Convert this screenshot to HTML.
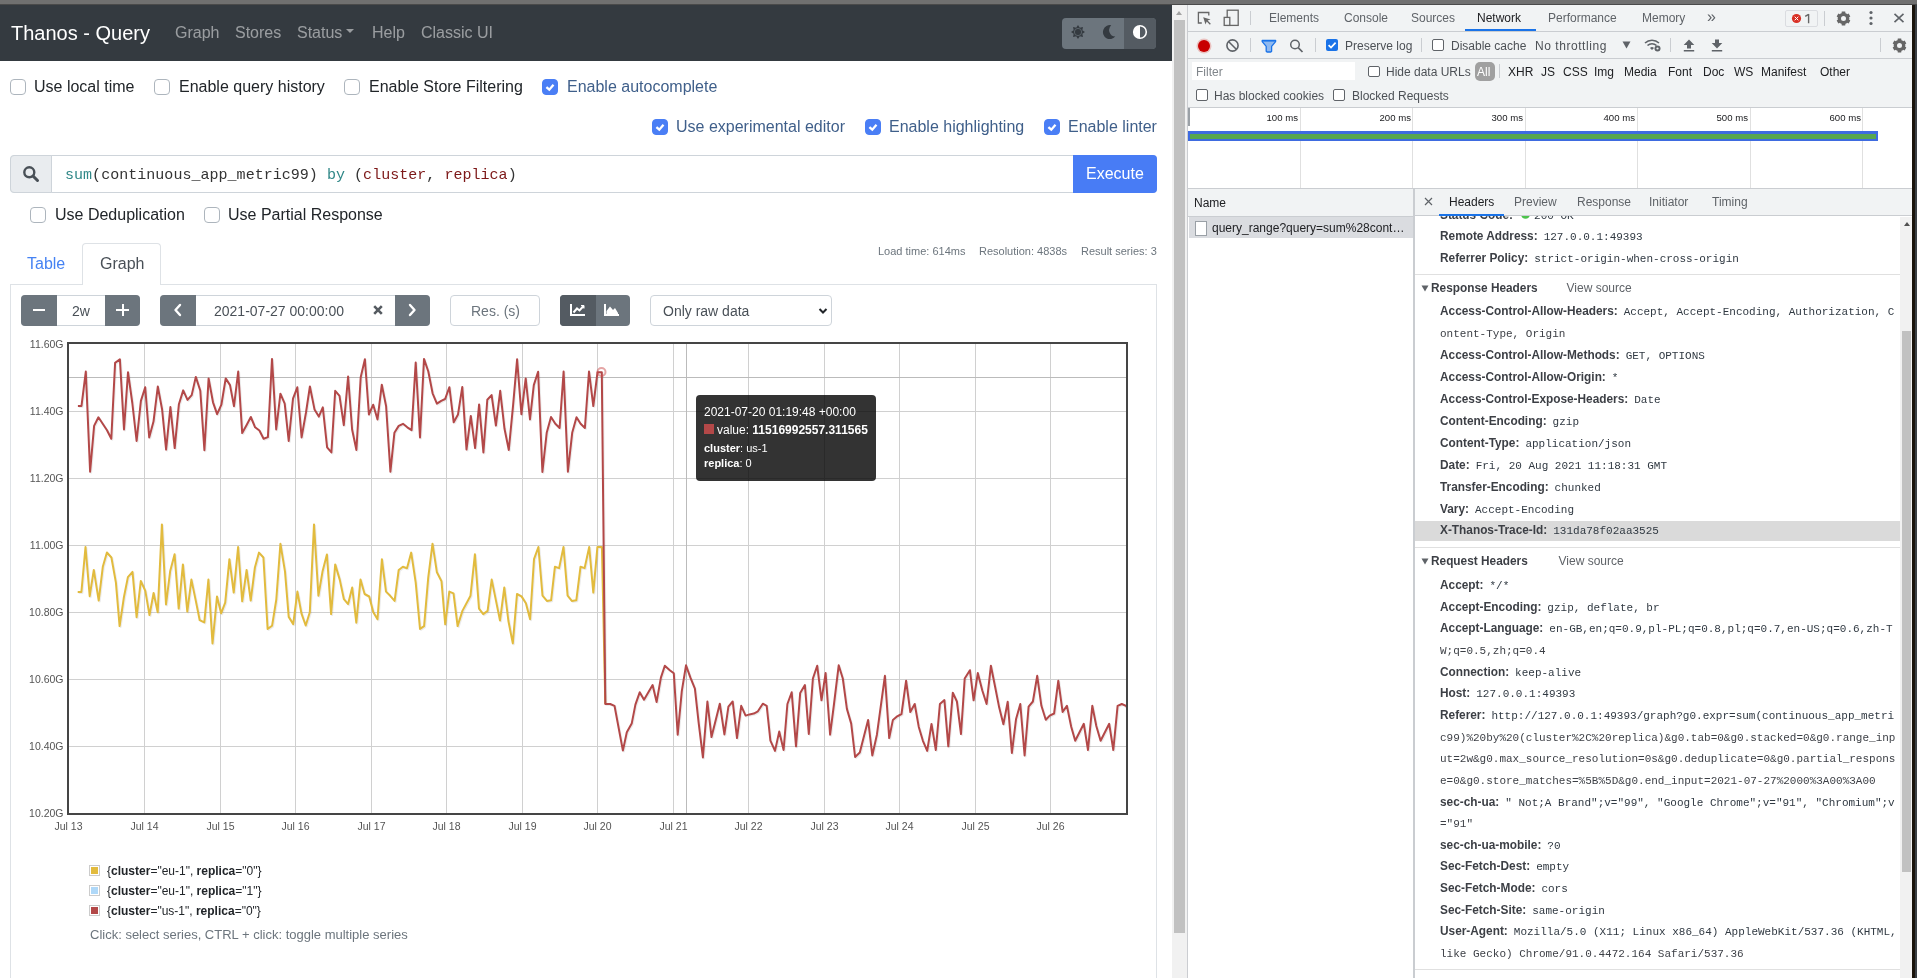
<!DOCTYPE html><html><head><meta charset="utf-8"><style>
*{box-sizing:border-box;margin:0;padding:0}
html,body{width:1917px;height:978px;overflow:hidden;background:#fff;font-family:"Liberation Sans",sans-serif;color:#212529}
.abs{position:absolute}
.t{position:absolute;white-space:nowrap;line-height:0;height:0}
.t>span{display:inline-block;line-height:normal;transform:translateY(-80%)}
body>*{will-change:transform}
.cb{position:absolute;width:16px;height:16px;border:1px solid #adb5bd;border-radius:4px;background:#fff}
.cb.on{background:#4a7ef5;border-color:#4a7ef5}
.cb svg{position:absolute;left:-1px;top:-1px}
.dt{font-family:"Liberation Sans",sans-serif;font-size:12px;color:#5f6368}
.mono{font-family:"Liberation Mono",monospace}
</style></head><body>

<div class="abs" style="left:0;top:0;width:1917px;height:5px;background:#707070"></div>
<div class="abs" style="left:0;top:4px;width:1917px;height:1px;background:#4a4a4a"></div>
<div class="abs" style="left:0;top:5px;width:1172px;height:56px;background:#343a40"></div>
<div class="t " style="left:11px;top:40px;font-size:20px;color:#fff"><span>Thanos - Query</span></div>
<div class="t " style="left:174.5px;top:38px;font-size:16px;color:rgba(255,255,255,.5)"><span>Graph</span></div>
<div class="t " style="left:235px;top:38px;font-size:16px;color:rgba(255,255,255,.5)"><span>Stores</span></div>
<div class="t " style="left:297px;top:38px;font-size:16px;color:rgba(255,255,255,.5)"><span>Status</span></div>
<div class="t " style="left:372px;top:38px;font-size:16px;color:rgba(255,255,255,.5)"><span>Help</span></div>
<div class="t " style="left:420.5px;top:38px;font-size:16px;color:rgba(255,255,255,.5)"><span>Classic UI</span></div>
<div class="abs" style="left:346.2px;top:29px;width:0;height:0;border-left:4.8px solid transparent;border-right:4.8px solid transparent;border-top:4.8px solid rgba(255,255,255,.5)"></div>
<div class="abs" style="left:1062px;top:18px;width:94px;height:31px;border-radius:4px;background:#6c757d;overflow:hidden"><div class="abs" style="left:62px;top:0;width:32px;height:31px;background:#545b62"></div></div>
<svg class="abs" style="left:1070px;top:24px" width="16" height="16" viewBox="-8 -8 16 16"><path d="M0.00,-7.00 L1.80,-4.34 L4.95,-4.95 L4.34,-1.80 L7.00,-0.00 L4.34,1.80 L4.95,4.95 L1.80,4.34 L0.00,7.00 L-1.80,4.34 L-4.95,4.95 L-4.34,1.80 L-7.00,0.00 L-4.34,-1.80 L-4.95,-4.95 L-1.80,-4.34 Z" fill="#343a40"/><circle r="3.6" fill="none" stroke="#6c757d" stroke-width="0.7"/><rect x="-2.1" y="-2.1" width="4.2" height="4.2" fill="#343a40"/></svg>
<svg class="abs" style="left:1101px;top:24px" width="16" height="16" viewBox="0 0 16 16"><path d="M10.2 1.2 A7 7 0 1 0 14.3 12.6 A6.6 6.6 0 0 1 10.2 1.2 Z" fill="#343a40"/></svg>
<svg class="abs" style="left:1132px;top:24px" width="16" height="16" viewBox="0 0 16 16"><circle cx="8" cy="8" r="6.3" fill="#545b62" stroke="#fff" stroke-width="1.6"/><path d="M8 1.7 A6.3 6.3 0 0 0 8 14.3 Z" fill="#fff"/></svg>
<div class="cb" style="left:10px;top:79px"></div>
<div class="t " style="left:34px;top:92px;font-size:16px;color:#212529"><span>Use local time</span></div>
<div class="cb" style="left:154px;top:79px"></div>
<div class="t " style="left:178.5px;top:92px;font-size:16px;color:#212529"><span>Enable query history</span></div>
<div class="cb" style="left:344px;top:79px"></div>
<div class="t " style="left:368.5px;top:92px;font-size:16px;color:#212529"><span>Enable Store Filtering</span></div>
<div class="cb on" style="left:542px;top:79px"><svg width="16" height="16" viewBox="0 0 16 16"><path d="M4.4 8.1 L7.3 10.7 L11.5 5.8" fill="none" stroke="#fff" stroke-width="2.3" stroke-linejoin="miter"/></svg></div>
<div class="t " style="left:566.5px;top:92px;font-size:16px;color:#3f5f8a"><span>Enable autocomplete</span></div>
<div class="cb on" style="left:652px;top:119px"><svg width="16" height="16" viewBox="0 0 16 16"><path d="M4.4 8.1 L7.3 10.7 L11.5 5.8" fill="none" stroke="#fff" stroke-width="2.3" stroke-linejoin="miter"/></svg></div>
<div class="t " style="left:676px;top:132px;font-size:16px;color:#3f5f8a"><span>Use experimental editor</span></div>
<div class="cb on" style="left:865px;top:119px"><svg width="16" height="16" viewBox="0 0 16 16"><path d="M4.4 8.1 L7.3 10.7 L11.5 5.8" fill="none" stroke="#fff" stroke-width="2.3" stroke-linejoin="miter"/></svg></div>
<div class="t " style="left:889px;top:132px;font-size:16px;color:#3f5f8a"><span>Enable highlighting</span></div>
<div class="cb on" style="left:1044px;top:119px"><svg width="16" height="16" viewBox="0 0 16 16"><path d="M4.4 8.1 L7.3 10.7 L11.5 5.8" fill="none" stroke="#fff" stroke-width="2.3" stroke-linejoin="miter"/></svg></div>
<div class="t " style="left:1068px;top:132px;font-size:16px;color:#3f5f8a"><span>Enable linter</span></div>
<div class="abs" style="left:10px;top:155px;width:1147px;height:38px;border:1px solid #ced4da;border-radius:4px;background:#fff"></div>
<div class="abs" style="left:10px;top:155px;width:42px;height:38px;border:1px solid #ced4da;border-radius:4px 0 0 4px;background:#e9ecef"></div>
<svg class="abs" style="left:22px;top:165px" width="18" height="18" viewBox="0 0 18 18"><circle cx="7.3" cy="7.3" r="5" fill="none" stroke="#495057" stroke-width="2.4"/><path d="M11 11 L15.5 15.5" stroke="#495057" stroke-width="3" stroke-linecap="round"/></svg>
<div class="abs" style="left:1073px;top:155px;width:84px;height:38px;border-radius:0 4px 4px 0;background:#487cf5"></div>
<div class="t " style="left:1086px;top:179px;font-size:16px;color:#fff"><span>Execute</span></div>
<div class="t mono" style="left:64.5px;top:180.5px;font-size:15px;color:#333;letter-spacing:0.03px"><span><span style="color:#2f8787">sum</span>(continuous_app_metric99) <span style="color:#2f8787">by</span> (<span style="color:#7d1818">cluster</span>, <span style="color:#7d1818">replica</span>)</span></div>
<div class="cb" style="left:30px;top:207px"></div>
<div class="t " style="left:54.5px;top:220px;font-size:16px"><span>Use Deduplication</span></div>
<div class="cb" style="left:204px;top:207px"></div>
<div class="t " style="left:228px;top:220px;font-size:16px"><span>Use Partial Response</span></div>
<div class="t " style="left:27px;top:269px;font-size:16px;color:#4582f3"><span>Table</span></div>
<div class="abs" style="left:10px;top:284px;width:1147px;height:720px;border:1px solid #dee2e6"></div>
<div class="abs" style="left:82px;top:243px;width:79px;height:42px;border:1px solid #dee2e6;border-bottom:none;border-radius:4px 4px 0 0;background:#fff"></div>
<div class="t " style="left:99.5px;top:269px;font-size:16px;color:#495057"><span>Graph</span></div>
<div class="t " style="left:878px;top:255px;font-size:11px;color:#6c757d"><span>Load time: 614ms</span></div>
<div class="t " style="left:978.5px;top:255px;font-size:11px;color:#6c757d"><span>Resolution: 4838s</span></div>
<div class="t " style="left:1080.5px;top:255px;font-size:11px;color:#6c757d"><span>Result series: 3</span></div>
<div class="abs" style="left:21px;top:295px;width:119px;height:31px;border:1px solid #ced4da;border-radius:4px;background:#fff"></div>
<div class="abs" style="left:21px;top:295px;width:36px;height:31px;background:#6c757d;border-radius:4px 0 0 4px"><div class="abs" style="left:11.5px;top:13.8px;width:12.5px;height:2px;background:#fff"></div></div>
<div class="abs" style="left:105px;top:295px;width:35px;height:31px;background:#6c757d;border-radius:0 4px 4px 0"><div class="abs" style="left:11.3px;top:13.8px;width:12.4px;height:2px;background:#fff"></div><div class="abs" style="left:16.5px;top:8.8px;width:2px;height:12.4px;background:#fff"></div></div>
<div class="t " style="left:72px;top:316px;font-size:14px;color:#495057"><span>2w</span></div>
<div class="abs" style="left:160px;top:295px;width:270px;height:31px;border:1px solid #ced4da;border-radius:4px;background:#fff"></div>
<div class="abs" style="left:160px;top:295px;width:36px;height:31px;background:#6c757d;border-radius:4px 0 0 4px"><svg class="abs" style="left:10px;top:7px" width="16" height="16" viewBox="0 0 16 16"><path d="M10 3 L5.5 8 L10 13" fill="none" stroke="#fff" stroke-width="2.4" stroke-linecap="round" stroke-linejoin="round"/></svg></div>
<div class="abs" style="left:395px;top:295px;width:35px;height:31px;background:#6c757d;border-radius:0 4px 4px 0"><svg class="abs" style="left:9px;top:7px" width="16" height="16" viewBox="0 0 16 16"><path d="M6 3 L10.5 8 L6 13" fill="none" stroke="#fff" stroke-width="2.4" stroke-linecap="round" stroke-linejoin="round"/></svg></div>
<div class="t " style="left:214px;top:316px;font-size:14px;color:#495057"><span>2021-07-27 00:00:00</span></div>
<svg class="abs" style="left:372px;top:304px" width="12" height="12" viewBox="0 0 12 12"><path d="M2.2 2.2 L9.8 9.8 M9.8 2.2 L2.2 9.8" stroke="#555b61" stroke-width="2.6" stroke-linecap="butt"/></svg>
<div class="abs" style="left:450px;top:295px;width:90px;height:31px;border:1px solid #ced4da;border-radius:4px;background:#fff"></div>
<div class="t " style="left:470.5px;top:316px;font-size:14px;color:#6c757d"><span>Res. (s)</span></div>
<div class="abs" style="left:560px;top:295px;width:70px;height:31px;border-radius:4px;background:#6c757d;overflow:hidden"><div class="abs" style="left:0;top:0;width:36px;height:31px;background:#545b62"></div></div>
<svg class="abs" style="left:570px;top:303px" width="16" height="14" viewBox="0 0 16 14"><path d="M1 1 V12 H15" fill="none" stroke="#fff" stroke-width="2"/><path d="M3.5 9.5 L7 5.5 L9.5 7.5 L13.5 3" fill="none" stroke="#fff" stroke-width="2"/><path d="M11 2.5 H14 V5.5" fill="#fff" stroke="#fff"/></svg>
<svg class="abs" style="left:604px;top:303px" width="16" height="14" viewBox="0 0 16 14"><path d="M1 1 V12 H15" fill="none" stroke="#fff" stroke-width="2"/><path d="M2.5 11 L2.5 8 L6 3.5 L9 7 L11 5 L14 10 L14 11 Z" fill="#fff"/></svg>
<div class="abs" style="left:650px;top:295px;width:182px;height:31px;border:1px solid #ced4da;border-radius:4px;background:#fff"></div>
<div class="t " style="left:663px;top:316px;font-size:14px;color:#495057"><span>Only raw data</span></div>
<svg class="abs" style="left:818px;top:306px" width="10" height="10" viewBox="0 0 10 10"><path d="M1.5 3 L5 6.5 L8.5 3" fill="none" stroke="#212529" stroke-width="2"/></svg>
<svg class="abs" style="left:0;top:0" width="1172" height="978">
<line x1="144.5" y1="344" x2="144.5" y2="813" stroke="#d0d0d0" stroke-width="1"/>
<line x1="220.5" y1="344" x2="220.5" y2="813" stroke="#d0d0d0" stroke-width="1"/>
<line x1="295.5" y1="344" x2="295.5" y2="813" stroke="#d0d0d0" stroke-width="1"/>
<line x1="371.5" y1="344" x2="371.5" y2="813" stroke="#d0d0d0" stroke-width="1"/>
<line x1="446.5" y1="344" x2="446.5" y2="813" stroke="#d0d0d0" stroke-width="1"/>
<line x1="522.5" y1="344" x2="522.5" y2="813" stroke="#d0d0d0" stroke-width="1"/>
<line x1="597.5" y1="344" x2="597.5" y2="813" stroke="#d0d0d0" stroke-width="1"/>
<line x1="673.5" y1="344" x2="673.5" y2="813" stroke="#d0d0d0" stroke-width="1"/>
<line x1="748.5" y1="344" x2="748.5" y2="813" stroke="#d0d0d0" stroke-width="1"/>
<line x1="824.5" y1="344" x2="824.5" y2="813" stroke="#d0d0d0" stroke-width="1"/>
<line x1="899.5" y1="344" x2="899.5" y2="813" stroke="#d0d0d0" stroke-width="1"/>
<line x1="975.5" y1="344" x2="975.5" y2="813" stroke="#d0d0d0" stroke-width="1"/>
<line x1="1050.5" y1="344" x2="1050.5" y2="813" stroke="#d0d0d0" stroke-width="1"/>
<line x1="69" y1="411.5" x2="1126" y2="411.5" stroke="#d0d0d0" stroke-width="1"/>
<line x1="69" y1="478.5" x2="1126" y2="478.5" stroke="#d0d0d0" stroke-width="1"/>
<line x1="69" y1="545.5" x2="1126" y2="545.5" stroke="#d0d0d0" stroke-width="1"/>
<line x1="69" y1="612.5" x2="1126" y2="612.5" stroke="#d0d0d0" stroke-width="1"/>
<line x1="69" y1="679.5" x2="1126" y2="679.5" stroke="#d0d0d0" stroke-width="1"/>
<line x1="69" y1="746.5" x2="1126" y2="746.5" stroke="#d0d0d0" stroke-width="1"/>
<line x1="686.5" y1="344" x2="686.5" y2="813" stroke="#bbb" stroke-width="1"/>
<line x1="69" y1="377.5" x2="1126" y2="377.5" stroke="#bbb" stroke-width="1"/>
<clipPath id="pc"><rect x="69" y="344" width="1057" height="469"/></clipPath>
<g clip-path="url(#pc)" fill="none" stroke-linejoin="round" stroke-width="2">
<path d="M78.7,593.0 L82.4,593.0 L86.5,548.0 L90.7,597.2 L94.8,570.9 L99.7,601.6 L103.8,567.8 L107.9,553.5 L112.4,558.5 L116.9,583.6 L120.6,627.1 L124.8,598.8 L128.9,578.1 L133.5,572.9 L137.6,618.2 L141.8,582.0 L146.3,591.9 L150.5,616.1 L154.6,594.0 L158.7,613.3 L162.9,525.4 L167.0,605.5 L171.2,571.9 L175.6,555.3 L179.7,609.6 L183.9,565.4 L188.3,612.6 L192.4,580.6 L196.6,600.9 L200.7,621.2 L205.3,623.4 L209.4,580.6 L213.5,644.4 L218.0,597.4 L222.1,614.3 L226.2,603.7 L230.4,560.2 L234.7,593.6 L239.1,548.0 L243.2,602.3 L247.6,571.0 L251.7,601.6 L255.9,568.5 L260.0,553.6 L264.4,558.5 L268.6,629.9 L273.1,626.7 L277.3,600.5 L281.4,544.7 L286.0,572.6 L289.7,617.9 L294.2,625.1 L298.4,592.6 L302.5,614.7 L306.7,626.5 L310.8,613.3 L315.0,525.4 L319.4,596.8 L323.5,572.6 L327.9,555.4 L332.1,615.1 L336.2,565.4 L340.8,580.9 L344.9,600.2 L349.1,605.1 L353.2,588.5 L357.3,623.7 L361.5,580.6 L365.6,595.0 L370.2,597.5 L374.3,613.3 L378.5,620.3 L382.9,560.2 L387.0,592.6 L391.2,596.8 L395.6,601.9 L399.7,571.0 L403.9,567.8 L408.0,569.2 L412.2,553.6 L416.7,583.7 L421.0,629.9 L425.1,627.1 L429.2,578.8 L433.5,544.7 L437.9,573.3 L442.5,582.3 L446.2,625.3 L450.3,592.6 L454.5,594.4 L458.6,627.1 L463.4,611.9 L471.5,596.7 L475.9,555.3 L480.0,609.6 L484.2,615.1 L488.6,611.9 L492.7,580.6 L501.0,621.6 L505.3,588.5 L509.4,622.0 L513.8,644.4 L518.0,595.0 L522.5,597.4 L526.9,604.3 L531.1,620.2 L535.0,560.2 L539.4,548.0 L543.5,596.7 L547.9,601.9 L552.1,601.3 L555.9,567.8 L560.1,569.1 L564.5,548.0 L568.6,596.7 L572.8,601.9 L577.3,601.3 L581.5,567.8 L585.6,569.1 L590.2,548.0 L594.3,593.6 L598.4,548.0 L602.9,548.0 L606.3,705.0" stroke="rgba(0,0,0,0.08)"/>
<path d="M77.7,592.0 L81.4,592.0 L85.5,547.0 L89.7,596.2 L93.8,569.9 L98.7,600.6 L102.8,566.8 L106.9,552.5 L111.4,557.5 L115.9,582.6 L119.6,626.1 L123.8,597.8 L127.9,577.1 L132.5,571.9 L136.6,617.2 L140.8,581.0 L145.3,590.9 L149.5,615.1 L153.6,593.0 L157.7,612.3 L161.9,524.4 L166.0,604.5 L170.2,570.9 L174.6,554.3 L178.7,608.6 L182.9,564.4 L187.3,611.6 L191.4,579.6 L195.6,599.9 L199.7,620.2 L204.3,622.4 L208.4,579.6 L212.5,643.4 L217.0,596.4 L221.1,613.3 L225.2,602.7 L229.4,559.2 L233.7,592.6 L238.1,547.0 L242.2,601.3 L246.6,570.0 L250.7,600.6 L254.9,567.5 L259.0,552.6 L263.4,557.5 L267.6,628.9 L272.1,625.7 L276.3,599.5 L280.4,543.7 L285.0,571.6 L288.7,616.9 L293.2,624.1 L297.4,591.6 L301.5,613.7 L305.7,625.5 L309.8,612.3 L314.0,524.4 L318.4,595.8 L322.5,571.6 L326.9,554.4 L331.1,614.1 L335.2,564.4 L339.8,579.9 L343.9,599.2 L348.1,604.1 L352.2,587.5 L356.3,622.7 L360.5,579.6 L364.6,594.0 L369.2,596.5 L373.3,612.3 L377.5,619.3 L381.9,559.2 L386.0,591.6 L390.2,595.8 L394.6,600.9 L398.7,570.0 L402.9,566.8 L407.0,568.2 L411.2,552.6 L415.7,582.7 L420.0,628.9 L424.1,626.1 L428.2,577.8 L432.5,543.7 L436.9,572.3 L441.5,581.3 L445.2,624.3 L449.3,591.6 L453.5,593.4 L457.6,626.1 L462.4,610.9 L470.5,595.7 L474.9,554.3 L479.0,608.6 L483.2,614.1 L487.6,610.9 L491.7,579.6 L500.0,620.6 L504.3,587.5 L508.4,621.0 L512.8,643.4 L517.0,594.0 L521.5,596.4 L525.9,603.3 L530.1,619.2 L534.0,559.2 L538.4,547.0 L542.5,595.7 L546.9,600.9 L551.1,600.3 L554.9,566.8 L559.1,568.1 L563.5,547.0 L567.6,595.7 L571.8,600.9 L576.3,600.3 L580.5,566.8 L584.6,568.1 L589.2,547.0 L593.3,592.6 L597.4,547.0 L601.9,547.0 L605.3,704.0" stroke="#e2bb3e"/>
<path d="M78.9,406.9 L82.5,406.9 L86.8,372.5 L91.1,472.7 L95.1,426.9 L99.4,418.3 L108.0,431.2 L112.3,439.8 L116.1,363.9 L120.9,360.3 L125.0,430.5 L129.0,373.2 L133.3,404.0 L137.6,442.0 L141.9,401.9 L146.2,388.3 L150.2,438.4 L154.5,422.6 L158.8,387.5 L163.1,410.5 L167.1,450.6 L171.4,408.0 L175.7,449.1 L179.9,405.2 L184.2,391.4 L188.5,400.9 L192.7,396.1 L196.8,377.9 L201.3,391.8 L205.4,451.3 L209.6,379.4 L214.0,403.3 L218.1,415.2 L222.4,405.7 L226.7,379.4 L231.0,386.1 L235.0,407.2 L239.2,372.5 L243.2,434.1 L247.5,426.2 L251.8,418.0 L256.1,428.3 L260.4,431.5 L264.6,439.8 L268.9,438.1 L273.0,359.9 L277.2,430.5 L281.4,394.7 L285.7,404.7 L289.7,442.0 L294.0,399.7 L298.3,388.3 L302.6,438.4 L306.9,414.0 L310.9,387.5 L315.5,410.4 L319.8,417.6 L323.8,408.3 L328.1,448.4 L332.4,453.4 L336.2,391.8 L340.5,396.8 L344.8,426.2 L349.1,377.5 L353.1,430.5 L357.4,451.0 L361.7,378.2 L365.9,360.3 L369.9,415.5 L374.2,405.7 L378.5,420.5 L382.8,385.7 L387.1,407.2 L391.4,472.7 L395.4,433.8 L399.7,426.9 L404.0,424.8 L408.3,428.3 L412.6,431.2 L416.7,363.6 L421.0,438.4 L425.0,359.9 L429.3,372.5 L433.6,394.3 L437.9,404.7 L442.2,401.8 L446.1,400.0 L450.4,388.2 L454.7,423.3 L459.0,415.4 L463.3,388.0 L467.5,450.5 L471.8,416.9 L476.1,449.1 L480.1,405.4 L484.4,453.4 L488.3,400.8 L492.6,396.1 L496.9,426.6 L501.2,391.8 L505.5,429.8 L509.8,451.0 L514.1,406.1 L518.1,360.3 L522.4,415.2 L526.7,379.4 L531.0,420.5 L534.8,386.1 L539.1,372.8 L543.4,473.0 L547.7,433.8 L552.0,418.0 L556.3,424.8 L560.6,429.0 L564.6,372.5 L568.9,472.7 L573.2,433.8 L577.5,418.3 L581.6,424.8 L585.9,429.0 L590.0,372.5 L594.3,407.1 L598.5,373.2 L602.8,373.2 L606.3,705.0 L611.2,705.0 L615.5,706.8 L623.9,751.6 L627.8,733.2 L632.7,724.6 L636.4,705.6 L640.7,693.3 L645.0,700.7 L653.6,686.0 L657.6,703.1 L661.9,678.6 L665.8,666.7 L670.8,671.2 L674.8,674.3 L678.7,735.7 L682.8,692.1 L687.0,666.3 L691.6,679.2 L695.9,689.7 L699.6,723.4 L703.9,758.4 L708.4,702.5 L712.5,738.1 L720.8,704.7 L725.4,735.4 L729.4,707.7 L733.7,702.5 L738.0,739.1 L742.2,706.8 L746.6,716.6 L750.5,715.4 L754.8,714.6 L758.9,712.3 L763.8,704.7 L767.7,706.8 L771.4,741.6 L776.0,751.9 L780.2,732.6 L784.6,751.0 L788.4,705.0 L792.7,693.3 L797.0,747.3 L801.2,693.9 L805.9,686.0 L809.8,735.0 L813.9,679.5 L818.2,666.7 L822.5,701.3 L826.6,674.1 L831.1,735.7 L835.0,705.0 L839.7,666.3 L843.8,679.5 L847.9,709.9 L852.2,724.6 L856.1,758.0 L860.8,753.5 L869.1,720.9 L873.3,756.5 L877.9,735.7 L885.9,676.8 L890.2,739.1 L893.9,720.9 L898.2,717.3 L902.5,715.0 L907.1,681.7 L911.3,713.0 L915.7,705.0 L919.7,727.7 L923.9,741.8 L928.2,751.9 L932.5,724.9 L936.8,751.0 L940.9,705.0 L945.4,701.1 L949.3,747.3 L953.8,693.7 L957.9,702.5 L962.0,735.0 L965.7,679.5 L970.9,671.2 L974.6,701.3 L978.8,674.1 L983.3,691.5 L987.6,705.0 L991.9,666.7 L996.1,687.8 L1000.2,708.6 L1004.4,725.2 L1008.7,702.8 L1012.9,754.0 L1017.0,720.3 L1021.3,705.0 L1025.6,756.5 L1029.6,707.7 L1033.9,702.5 L1038.2,676.8 L1042.4,706.8 L1046.8,720.7 L1050.7,716.6 L1055.1,714.5 L1059.3,681.7 L1063.6,712.9 L1067.9,706.8 L1072.2,727.7 L1076.2,741.8 L1084.8,724.8 L1089.0,751.0 L1093.3,706.8 L1097.3,727.0 L1101.6,741.8 L1110.2,724.8 L1114.3,751.0 L1118.6,706.8 L1122.8,705.0 L1127.0,706.8 L1131.0,713.0" stroke="rgba(0,0,0,0.08)"/>
<path d="M77.9,405.9 L81.5,405.9 L85.8,371.5 L90.1,471.7 L94.1,425.9 L98.4,417.3 L107.0,430.2 L111.3,438.8 L115.1,362.9 L119.9,359.3 L124.0,429.5 L128.0,372.2 L132.3,403.0 L136.6,441.0 L140.9,400.9 L145.2,387.3 L149.2,437.4 L153.5,421.6 L157.8,386.5 L162.1,409.5 L166.1,449.6 L170.4,407.0 L174.7,448.1 L178.9,404.2 L183.2,390.4 L187.5,399.9 L191.7,395.1 L195.8,376.9 L200.3,390.8 L204.4,450.3 L208.6,378.4 L213.0,402.3 L217.1,414.2 L221.4,404.7 L225.7,378.4 L230.0,385.1 L234.0,406.2 L238.2,371.5 L242.2,433.1 L246.5,425.2 L250.8,417.0 L255.1,427.3 L259.4,430.5 L263.6,438.8 L267.9,437.1 L272.0,358.9 L276.2,429.5 L280.4,393.7 L284.7,403.7 L288.7,441.0 L293.0,398.7 L297.3,387.3 L301.6,437.4 L305.9,413.0 L309.9,386.5 L314.5,409.4 L318.8,416.6 L322.8,407.3 L327.1,447.4 L331.4,452.4 L335.2,390.8 L339.5,395.8 L343.8,425.2 L348.1,376.5 L352.1,429.5 L356.4,450.0 L360.7,377.2 L364.9,359.3 L368.9,414.5 L373.2,404.7 L377.5,419.5 L381.8,384.7 L386.1,406.2 L390.4,471.7 L394.4,432.8 L398.7,425.9 L403.0,423.8 L407.3,427.3 L411.6,430.2 L415.7,362.6 L420.0,437.4 L424.0,358.9 L428.3,371.5 L432.6,393.3 L436.9,403.7 L441.2,400.8 L445.1,399.0 L449.4,387.2 L453.7,422.3 L458.0,414.4 L462.3,387.0 L466.5,449.5 L470.8,415.9 L475.1,448.1 L479.1,404.4 L483.4,452.4 L487.3,399.8 L491.6,395.1 L495.9,425.6 L500.2,390.8 L504.5,428.8 L508.8,450.0 L513.1,405.1 L517.1,359.3 L521.4,414.2 L525.7,378.4 L530.0,419.5 L533.8,385.1 L538.1,371.8 L542.4,472.0 L546.7,432.8 L551.0,417.0 L555.3,423.8 L559.6,428.0 L563.6,371.5 L567.9,471.7 L572.2,432.8 L576.5,417.3 L580.6,423.8 L584.9,428.0 L589.0,371.5 L593.3,406.1 L597.5,372.2 L601.8,372.2 L605.3,704.0 L610.2,704.0 L614.5,705.8 L622.9,750.6 L626.8,732.2 L631.7,723.6 L635.4,704.6 L639.7,692.3 L644.0,699.7 L652.6,685.0 L656.6,702.1 L660.9,677.6 L664.8,665.7 L669.8,670.2 L673.8,673.3 L677.7,734.7 L681.8,691.1 L686.0,665.3 L690.6,678.2 L694.9,688.7 L698.6,722.4 L702.9,757.4 L707.4,701.5 L711.5,737.1 L719.8,703.7 L724.4,734.4 L728.4,706.7 L732.7,701.5 L737.0,738.1 L741.2,705.8 L745.6,715.6 L749.5,714.4 L753.8,713.6 L757.9,711.3 L762.8,703.7 L766.7,705.8 L770.4,740.6 L775.0,750.9 L779.2,731.6 L783.6,750.0 L787.4,704.0 L791.7,692.3 L796.0,746.3 L800.2,692.9 L804.9,685.0 L808.8,734.0 L812.9,678.5 L817.2,665.7 L821.5,700.3 L825.6,673.1 L830.1,734.7 L834.0,704.0 L838.7,665.3 L842.8,678.5 L846.9,708.9 L851.2,723.6 L855.1,757.0 L859.8,752.5 L868.1,719.9 L872.3,755.5 L876.9,734.7 L884.9,675.8 L889.2,738.1 L892.9,719.9 L897.2,716.3 L901.5,714.0 L906.1,680.7 L910.3,712.0 L914.7,704.0 L918.7,726.7 L922.9,740.8 L927.2,750.9 L931.5,723.9 L935.8,750.0 L939.9,704.0 L944.4,700.1 L948.3,746.3 L952.8,692.7 L956.9,701.5 L961.0,734.0 L964.7,678.5 L969.9,670.2 L973.6,700.3 L977.8,673.1 L982.3,690.5 L986.6,704.0 L990.9,665.7 L995.1,686.8 L999.2,707.6 L1003.4,724.2 L1007.7,701.8 L1011.9,753.0 L1016.0,719.3 L1020.3,704.0 L1024.6,755.5 L1028.6,706.7 L1032.9,701.5 L1037.2,675.8 L1041.4,705.8 L1045.8,719.7 L1049.7,715.6 L1054.1,713.5 L1058.3,680.7 L1062.6,711.9 L1066.9,705.8 L1071.2,726.7 L1075.2,740.8 L1083.8,723.8 L1088.0,750.0 L1092.3,705.8 L1096.3,726.0 L1100.6,740.8 L1109.2,723.8 L1113.3,750.0 L1117.6,705.8 L1121.8,704.0 L1126.0,705.8 L1130.0,712.0" stroke="#b34848"/>
</g>
<circle cx="601.5" cy="372" r="4" fill="none" stroke="rgba(203,75,75,0.5)" stroke-width="2"/>
<rect x="68" y="343" width="1059" height="471" fill="none" stroke="#454545" stroke-width="2"/>
<text x="63.5" y="348" text-anchor="end" font-size="10.5" fill="#545454">11.60G</text>
<text x="63.5" y="415" text-anchor="end" font-size="10.5" fill="#545454">11.40G</text>
<text x="63.5" y="482" text-anchor="end" font-size="10.5" fill="#545454">11.20G</text>
<text x="63.5" y="549" text-anchor="end" font-size="10.5" fill="#545454">11.00G</text>
<text x="63.5" y="616" text-anchor="end" font-size="10.5" fill="#545454">10.80G</text>
<text x="63.5" y="683" text-anchor="end" font-size="10.5" fill="#545454">10.60G</text>
<text x="63.5" y="750" text-anchor="end" font-size="10.5" fill="#545454">10.40G</text>
<text x="63.5" y="817" text-anchor="end" font-size="10.5" fill="#545454">10.20G</text>
<text x="68.5" y="830" text-anchor="middle" font-size="10.5" fill="#545454">Jul 13</text>
<text x="144.5" y="830" text-anchor="middle" font-size="10.5" fill="#545454">Jul 14</text>
<text x="220.5" y="830" text-anchor="middle" font-size="10.5" fill="#545454">Jul 15</text>
<text x="295.5" y="830" text-anchor="middle" font-size="10.5" fill="#545454">Jul 16</text>
<text x="371.5" y="830" text-anchor="middle" font-size="10.5" fill="#545454">Jul 17</text>
<text x="446.5" y="830" text-anchor="middle" font-size="10.5" fill="#545454">Jul 18</text>
<text x="522.5" y="830" text-anchor="middle" font-size="10.5" fill="#545454">Jul 19</text>
<text x="597.5" y="830" text-anchor="middle" font-size="10.5" fill="#545454">Jul 20</text>
<text x="673.5" y="830" text-anchor="middle" font-size="10.5" fill="#545454">Jul 21</text>
<text x="748.5" y="830" text-anchor="middle" font-size="10.5" fill="#545454">Jul 22</text>
<text x="824.5" y="830" text-anchor="middle" font-size="10.5" fill="#545454">Jul 23</text>
<text x="899.5" y="830" text-anchor="middle" font-size="10.5" fill="#545454">Jul 24</text>
<text x="975.5" y="830" text-anchor="middle" font-size="10.5" fill="#545454">Jul 25</text>
<text x="1050.5" y="830" text-anchor="middle" font-size="10.5" fill="#545454">Jul 26</text>
</svg>
<div class="abs" style="left:696px;top:395px;width:180px;height:86px;border-radius:4px;background:rgba(0,0,0,.8);color:#fff"></div>
<div class="t " style="left:704px;top:416px;font-size:12px;color:#fff"><span>2021-07-20 01:19:48 +00:00</span></div>
<div class="abs" style="left:704px;top:424px;width:10px;height:10px;background:#b34848"></div>
<div class="t " style="left:717px;top:434px;font-size:12px;color:#fff"><span>value: <b>11516992557.311565</b></span></div>
<div class="t " style="left:704px;top:452px;font-size:11px;color:#fff"><span><b>cluster</b>: us-1</span></div>
<div class="t " style="left:704px;top:467px;font-size:11px;color:#fff"><span><b>replica</b>: 0</span></div>
<div class="abs" style="left:89px;top:865px;width:11px;height:11px;border:1px solid #ccc;padding:1px"><div style="width:7px;height:7px;background:#e2bb3e"></div></div>
<div class="t " style="left:107px;top:875px;font-size:12px;color:#212529"><span>{<b>cluster</b>="eu-1", <b>replica</b>="0"}</span></div>
<div class="abs" style="left:89px;top:885px;width:11px;height:11px;border:1px solid #ccc;padding:1px"><div style="width:7px;height:7px;background:#afd8f8"></div></div>
<div class="t " style="left:107px;top:895px;font-size:12px;color:#212529"><span>{<b>cluster</b>="eu-1", <b>replica</b>="1"}</span></div>
<div class="abs" style="left:89px;top:905px;width:11px;height:11px;border:1px solid #ccc;padding:1px"><div style="width:7px;height:7px;background:#b34848"></div></div>
<div class="t " style="left:107px;top:915px;font-size:12px;color:#212529"><span>{<b>cluster</b>="us-1", <b>replica</b>="0"}</span></div>
<div class="t " style="left:90px;top:939px;font-size:13px;color:#6c757d"><span>Click: select series, CTRL + click: toggle multiple series</span></div>
<div class="abs" style="left:1172px;top:5px;width:16px;height:973px;background:#f1f1f1"></div>
<div class="abs" style="left:1174px;top:20px;width:11px;height:913px;background:#c1c1c1"></div>
<div class="abs" style="left:1176px;top:11px;width:0;height:0;border-left:3.5px solid transparent;border-right:3.5px solid transparent;border-bottom:4px solid #a3a3a3"></div>
<div class="abs" style="left:1187px;top:5px;width:1px;height:973px;background:#cbcdd1"></div>
<div class="abs" style="left:1188px;top:5px;width:724px;height:973px;background:#f1f3f4"></div>
<div class="abs" style="left:1912px;top:5px;width:5px;height:973px;background:#3b4045"></div><div class="abs" style="left:1912px;top:5px;width:3px;height:973px;background:#1a140c"></div>
<div class="abs" style="left:1188px;top:31px;width:724px;height:1px;background:#cacdd1"></div>
<svg class="abs" style="left:1197px;top:11px" width="15" height="15" viewBox="0 0 15 15"><path d="M4.8 12 H1.4 V1.5 H11.8 V4.4" fill="none" stroke="#666" stroke-width="1.3"/><path d="M6.2 6.3 L13.6 8.4 L10.6 9.6 L13.8 12.8 L12.9 13.7 L9.7 10.5 L8.5 13.6 Z" fill="#666"/></svg>
<svg class="abs" style="left:1222px;top:9px" width="18" height="18" viewBox="0 0 18 18"><rect x="5.2" y="1.2" width="11" height="15.2" fill="none" stroke="#666" stroke-width="1.3"/><rect x="2.2" y="8.4" width="5.6" height="8" fill="#f1f3f4" stroke="#666" stroke-width="1.3"/></svg>
<div class="abs" style="left:1250px;top:11px;width:1px;height:14px;background:#cacdd1"></div>
<div class="t dt" style="left:1268.5px;top:22px;color:#5f6368"><span>Elements</span></div>
<div class="t dt" style="left:1343.5px;top:22px;color:#5f6368"><span>Console</span></div>
<div class="t dt" style="left:1410.5px;top:22px;color:#5f6368"><span>Sources</span></div>
<div class="t dt" style="left:1476.5px;top:22px;color:#202124"><span>Network</span></div>
<div class="t dt" style="left:1548px;top:22px;color:#5f6368"><span>Performance</span></div>
<div class="t dt" style="left:1641.5px;top:22px;color:#5f6368"><span>Memory</span></div>
<div class="abs" style="left:1465px;top:29px;width:71px;height:2px;background:#1a73e8"></div>
<div class="t dt" style="left:1707px;top:22px;font-size:16px;color:#5f6368"><span>&#187;</span></div>
<div class="abs" style="left:1785px;top:10px;width:33px;height:17px;border:1px solid #dadce0;border-radius:2px;background:#f1f3f4"></div>
<svg class="abs" style="left:1791px;top:13px" width="11" height="11" viewBox="0 0 11 11"><circle cx="5.5" cy="5.5" r="4.6" fill="#d93025"/><path d="M3.7 3.7 L7.3 7.3 M7.3 3.7 L3.7 7.3" stroke="#fff" stroke-width="1"/></svg>
<svg class="abs" style="left:1804px;top:13px" width="7" height="11" viewBox="0 0 7 11"><path d="M4.6 1 V10.2 M4.6 1.3 L1.2 3.4" fill="none" stroke="#666" stroke-width="1.4"/></svg>
<div class="abs" style="left:1824px;top:11px;width:1px;height:15px;background:#cacdd1"></div>
<svg class="abs" style="left:1835.5px;top:10.5px" width="15" height="15" viewBox="-7.5 -7.5 15 15"><path d="M-1.97,-5.24 L-1.69,-6.90 L1.69,-6.90 L1.97,-5.24 L2.95,-5.11 L3.55,-4.33 L5.13,-4.91 L6.82,-1.99 L5.53,-0.91 L5.90,-0.00 L5.53,0.91 L6.82,1.99 L5.13,4.91 L3.55,4.33 L2.95,5.11 L1.97,5.24 L1.69,6.90 L-1.69,6.90 L-1.97,5.24 L-2.95,5.11 L-3.55,4.33 L-5.13,4.91 L-6.82,1.99 L-5.53,0.91 L-5.90,0.00 L-5.53,-0.91 L-6.82,-1.99 L-5.13,-4.91 L-3.55,-4.33 L-2.95,-5.11 Z M2.5,0 A2.5,2.5 0 1 0 -2.5,0 A2.5,2.5 0 1 0 2.5,0 Z" fill="#666" fill-rule="evenodd"/></svg>
<svg class="abs" style="left:1868px;top:10px" width="6" height="16" viewBox="0 0 6 16"><circle cx="3" cy="2.5" r="1.6" fill="#5f6368"/><circle cx="3" cy="8" r="1.6" fill="#5f6368"/><circle cx="3" cy="13.5" r="1.6" fill="#5f6368"/></svg>
<svg class="abs" style="left:1893px;top:13px" width="12" height="10" viewBox="0 0 12 10"><path d="M1.5 0.8 L10.5 9.2 M10.5 0.8 L1.5 9.2" stroke="#5f6368" stroke-width="1.6"/></svg>
<div class="abs" style="left:1188px;top:58px;width:724px;height:1px;background:#cacdd1"></div>
<svg class="abs" style="left:1195px;top:37px" width="18" height="18" viewBox="0 0 18 18"><circle cx="9" cy="9" r="7.5" fill="rgba(217,48,37,.25)"/><circle cx="9" cy="9" r="6" fill="#c80000"/></svg>
<svg class="abs" style="left:1225px;top:38px" width="15" height="15" viewBox="0 0 15 15"><circle cx="7.5" cy="7.5" r="5.6" fill="none" stroke="#5f6368" stroke-width="1.6"/><path d="M3.5 3.5 L11.5 11.5" stroke="#5f6368" stroke-width="1.6"/></svg>
<div class="abs" style="left:1250px;top:38px;width:1px;height:14px;background:#cacdd1"></div>
<svg class="abs" style="left:1261px;top:39px" width="16" height="14" viewBox="0 0 16 14"><path d="M1.2 1.3 H14.6 V2.6 L10.6 7.4 V12.3 L9.8 13 H6 L5.2 12.3 V7.4 L1.2 2.6 Z" fill="rgba(26,115,232,.45)" stroke="#1a73e8" stroke-width="1.3" stroke-linejoin="round"/><path d="M1.2 1.3 H14.6 V2.6 H1.2 Z" fill="#1a73e8"/></svg>
<svg class="abs" style="left:1289px;top:38px" width="16" height="16" viewBox="0 0 16 16"><circle cx="6" cy="6.5" r="4.3" fill="none" stroke="#5f6368" stroke-width="1.5"/><path d="M9.2 9.7 L13.5 14" stroke="#5f6368" stroke-width="1.7"/></svg>
<div class="abs" style="left:1315px;top:38px;width:1px;height:14px;background:#cacdd1"></div>
<div class="abs" style="left:1326px;top:39px;width:12px;height:12px;border-radius:2px;background:#1a73e8"><svg class="abs" style="left:0;top:0" width="12" height="12" viewBox="0 0 12 12"><path d="M2.6 6.2 L5 8.6 L9.6 3.6" fill="none" stroke="#fff" stroke-width="1.7"/></svg></div>
<div class="t dt" style="left:1344.5px;top:50px;color:#4d5156"><span>Preserve log</span></div>
<div class="abs" style="left:1421px;top:38px;width:1px;height:14px;background:#cacdd1"></div>
<div class="abs" style="left:1432px;top:39px;width:12px;height:12px;border:1px solid #5f6368;border-radius:2px;background:#fff"></div>
<div class="t dt" style="left:1450.5px;top:50px;color:#4d5156"><span>Disable cache</span></div>
<div class="t dt" style="left:1535px;top:50px;color:#4d5156;letter-spacing:0.55px"><span>No throttling</span></div>
<svg class="abs" style="left:1622px;top:41px" width="9" height="8" viewBox="0 0 9 8"><path d="M0.5 0.5 H8.5 L4.5 7.5 Z" fill="#5f6368"/></svg>
<svg class="abs" style="left:1644px;top:38px" width="18" height="14" viewBox="0 0 18 14"><path d="M1 5 A10 10 0 0 1 15 5" fill="none" stroke="#5f6368" stroke-width="1.5"/><path d="M3.5 7.5 A6.5 6.5 0 0 1 12.5 7.5" fill="none" stroke="#5f6368" stroke-width="1.5"/><path d="M6 10 L8 12 L10 10 A3 3 0 0 0 6 10 Z" fill="#5f6368"/><circle cx="13.5" cy="10.5" r="3" fill="#5f6368"/><circle cx="13.5" cy="10.5" r="1.1" fill="#f1f3f4"/></svg>
<div class="abs" style="left:1670px;top:38px;width:1px;height:14px;background:#cacdd1"></div>
<svg class="abs" style="left:1683px;top:39px" width="12" height="13" viewBox="0 0 12 13"><path d="M6 0.5 L11.3 6 H8 V9.5 H4 V6 H0.7 Z" fill="#5f6368"/><rect x="0.8" y="11" width="10.4" height="1.5" fill="#5f6368"/></svg>
<svg class="abs" style="left:1711px;top:39px" width="12" height="13" viewBox="0 0 12 13"><path d="M6 9.5 L11.3 4 H8 V0.5 H4 V4 H0.7 Z" fill="#5f6368"/><rect x="0.8" y="11" width="10.4" height="1.5" fill="#5f6368"/></svg>
<div class="abs" style="left:1880px;top:38px;width:1px;height:14px;background:#cacdd1"></div>
<svg class="abs" style="left:1891.5px;top:37.5px" width="15" height="15" viewBox="-7.5 -7.5 15 15"><path d="M-1.97,-5.24 L-1.69,-6.90 L1.69,-6.90 L1.97,-5.24 L2.95,-5.11 L3.55,-4.33 L5.13,-4.91 L6.82,-1.99 L5.53,-0.91 L5.90,-0.00 L5.53,0.91 L6.82,1.99 L5.13,4.91 L3.55,4.33 L2.95,5.11 L1.97,5.24 L1.69,6.90 L-1.69,6.90 L-1.97,5.24 L-2.95,5.11 L-3.55,4.33 L-5.13,4.91 L-6.82,1.99 L-5.53,0.91 L-5.90,0.00 L-5.53,-0.91 L-6.82,-1.99 L-5.13,-4.91 L-3.55,-4.33 L-2.95,-5.11 Z M2.5,0 A2.5,2.5 0 1 0 -2.5,0 A2.5,2.5 0 1 0 2.5,0 Z" fill="#666" fill-rule="evenodd"/></svg>
<div class="abs" style="left:1192px;top:62px;width:163px;height:18px;background:#fff"></div>
<div class="t dt" style="left:1195.5px;top:76px;color:#80868b"><span>Filter</span></div>
<div class="abs" style="left:1368px;top:66px;width:12px;height:11px;border:1px solid #5f6368;border-radius:2px;background:#fff"></div>
<div class="t dt" style="left:1386px;top:76px;color:#4d5156"><span>Hide data URLs</span></div>
<div class="abs" style="left:1475px;top:62px;width:20px;height:19px;border-radius:5px;background:#a0a0a0"></div>
<div class="t dt" style="left:1477px;top:76px;color:#fff"><span>All</span></div>
<div class="abs" style="left:1499px;top:64px;width:1px;height:14px;background:#cacdd1"></div>
<div class="t dt" style="left:1507.5px;top:76px;color:#202124"><span>XHR</span></div>
<div class="t dt" style="left:1541px;top:76px;color:#202124"><span>JS</span></div>
<div class="t dt" style="left:1563px;top:76px;color:#202124"><span>CSS</span></div>
<div class="t dt" style="left:1593.5px;top:76px;color:#202124"><span>Img</span></div>
<div class="t dt" style="left:1624px;top:76px;color:#202124"><span>Media</span></div>
<div class="t dt" style="left:1668px;top:76px;color:#202124"><span>Font</span></div>
<div class="t dt" style="left:1702.5px;top:76px;color:#202124"><span>Doc</span></div>
<div class="t dt" style="left:1733.5px;top:76px;color:#202124"><span>WS</span></div>
<div class="t dt" style="left:1761px;top:76px;color:#202124"><span>Manifest</span></div>
<div class="t dt" style="left:1819.5px;top:76px;color:#202124"><span>Other</span></div>
<div class="abs" style="left:1196px;top:89px;width:12px;height:12px;border:1px solid #5f6368;border-radius:2px;background:#fff"></div>
<div class="t dt" style="left:1214px;top:100px;color:#4d5156"><span>Has blocked cookies</span></div>
<div class="abs" style="left:1333px;top:89px;width:12px;height:12px;border:1px solid #5f6368;border-radius:2px;background:#fff"></div>
<div class="t dt" style="left:1351.5px;top:100px;color:#4d5156"><span>Blocked Requests</span></div>
<div class="abs" style="left:1188px;top:107px;width:724px;height:1px;background:#cacdd1"></div>
<div class="abs" style="left:1188px;top:108px;width:724px;height:81px;background:#fff"></div>
<div class="abs" style="left:1300px;top:108px;width:1px;height:81px;background:#e0e0e0"></div>
<div class="abs" style="left:1412px;top:108px;width:1px;height:81px;background:#e0e0e0"></div>
<div class="abs" style="left:1525px;top:108px;width:1px;height:81px;background:#e0e0e0"></div>
<div class="abs" style="left:1637px;top:108px;width:1px;height:81px;background:#e0e0e0"></div>
<div class="abs" style="left:1750px;top:108px;width:1px;height:81px;background:#e0e0e0"></div>
<div class="abs" style="left:1862px;top:108px;width:1px;height:81px;background:#e0e0e0"></div>
<div class="t dt" style="left:1238px;top:121px;width:60px;text-align:right;font-size:9.6px;color:#202124"><span>100 ms</span></div>
<div class="t dt" style="left:1350.5px;top:121px;width:60px;text-align:right;font-size:9.6px;color:#202124"><span>200 ms</span></div>
<div class="t dt" style="left:1463px;top:121px;width:60px;text-align:right;font-size:9.6px;color:#202124"><span>300 ms</span></div>
<div class="t dt" style="left:1575px;top:121px;width:60px;text-align:right;font-size:9.6px;color:#202124"><span>400 ms</span></div>
<div class="t dt" style="left:1688px;top:121px;width:60px;text-align:right;font-size:9.6px;color:#202124"><span>500 ms</span></div>
<div class="t dt" style="left:1800.5px;top:121px;width:60px;text-align:right;font-size:9.6px;color:#202124"><span>600 ms</span></div>
<div class="abs" style="left:1188px;top:108px;width:2px;height:18px;background:#9aa0a6"></div>
<div class="abs" style="left:1188px;top:131px;width:690px;height:10px;background:#3e6be0"></div>
<div class="abs" style="left:1190px;top:133.5px;width:686px;height:5px;background:#57a64f"></div>
<div class="abs" style="left:1188px;top:188px;width:724px;height:1px;background:#cacdd1"></div>
<div class="abs" style="left:1188px;top:189px;width:226px;height:27px;background:#f1f3f4"></div>
<div class="abs" style="left:1188px;top:216px;width:226px;height:762px;background:#fff"></div>
<div class="abs" style="left:1188px;top:216px;width:226px;height:1px;background:#cacdd1"></div>
<div class="t dt" style="left:1193.5px;top:207px;color:#202124"><span>Name</span></div>
<div class="abs" style="left:1189px;top:217px;width:225px;height:21px;background:#dadce0"></div>
<div class="abs" style="left:1195px;top:221px;width:12px;height:15px;border:1px solid #9aa0a6;background:#fff"></div>
<div class="t dt" style="left:1212px;top:232px;color:#202124"><span>query_range?query=sum%28cont…</span></div>
<div class="abs" style="left:1413px;top:189px;width:2px;height:789px;background:#cacdd1"></div>
<div class="abs" style="left:1415px;top:189px;width:497px;height:26px;background:#f1f3f4"></div>
<div class="abs" style="left:1415px;top:216px;width:497px;height:762px;background:#fff"></div>
<div class="abs" style="left:1415px;top:215px;width:497px;height:1px;background:#cacdd1"></div>
<svg class="abs" style="left:1423.5px;top:197px" width="9" height="9" viewBox="0 0 9 9"><path d="M1 1 L8 8 M8 1 L1 8" stroke="#5f6368" stroke-width="1.2"/></svg>
<div class="t dt" style="left:1448.5px;top:206px;color:#202124"><span>Headers</span></div>
<div class="t dt" style="left:1513.5px;top:206px;color:#5f6368"><span>Preview</span></div>
<div class="t dt" style="left:1577px;top:206px;color:#5f6368"><span>Response</span></div>
<div class="t dt" style="left:1648.5px;top:206px;color:#5f6368"><span>Initiator</span></div>
<div class="t dt" style="left:1712px;top:206px;color:#5f6368"><span>Timing</span></div>
<div class="abs" style="left:1439px;top:213.5px;width:65px;height:2px;background:#1a73e8"></div>
<div class="abs" style="left:1415px;top:216px;width:485px;height:762px;overflow:hidden">
<div class="t dt" style="left:25px;top:3px;font-size:11.85px"><span><b style="color:#3c3f45">Status Code:</b><span style="display:inline-block;width:9px;height:9px;border-radius:50%;background:#0a0;margin-left:8px;opacity:.7"></span><span class="mono" style="font-size:11px;color:#303942;margin-left:4px">200 OK</span></span></div>
<div class="t dt" style="left:25px;top:24px;font-size:11.85px"><span><b style="color:#3c3f45">Remote Address:</b><span class="mono" style="font-size:11px;color:#303942;margin-left:6px">127.0.0.1:49393</span></span></div>
<div class="t dt" style="left:25px;top:46px;font-size:11.85px"><span><b style="color:#3c3f45">Referrer Policy:</b><span class="mono" style="font-size:11px;color:#303942;margin-left:6px">strict-origin-when-cross-origin</span></span></div>
<div class="abs" style="left:0;top:58px;width:485px;height:1px;background:#e0e0e0"></div>
<svg class="abs" style="left:6px;top:69px" width="8" height="7" viewBox="0 0 8 7"><path d="M0.5 0.5 H7.5 L4 6.5 Z" fill="#5f6368"/></svg>
<div class="t dt" style="left:16px;top:76px;font-size:11.85px"><span><b style="color:#3c3f45">Response Headers</b></span></div>
<div class="t dt" style="left:151.5px;top:76px;color:#5f6368"><span>View source</span></div>
<div class="t dt" style="left:25px;top:99.39999999999998px;font-size:11.85px"><span><b style="color:#3c3f45">Access-Control-Allow-Headers:</b><span class="mono" style="font-size:11px;color:#303942;margin-left:6px">Accept, Accept-Encoding, Authorization, C</span></span></div>
<div class="t dt" style="left:25px;top:121.29999999999995px;font-size:11.85px"><span><span class="mono" style="font-size:11px;color:#3c3f45">ontent-Type, Origin</span></span></div>
<div class="t dt" style="left:25px;top:143.19999999999993px;font-size:11.85px"><span><b style="color:#3c3f45">Access-Control-Allow-Methods:</b><span class="mono" style="font-size:11px;color:#303942;margin-left:6px">GET, OPTIONS</span></span></div>
<div class="t dt" style="left:25px;top:165.0999999999999px;font-size:11.85px"><span><b style="color:#3c3f45">Access-Control-Allow-Origin:</b><span class="mono" style="font-size:11px;color:#303942;margin-left:6px">*</span></span></div>
<div class="t dt" style="left:25px;top:186.9999999999999px;font-size:11.85px"><span><b style="color:#3c3f45">Access-Control-Expose-Headers:</b><span class="mono" style="font-size:11px;color:#303942;margin-left:6px">Date</span></span></div>
<div class="t dt" style="left:25px;top:208.89999999999986px;font-size:11.85px"><span><b style="color:#3c3f45">Content-Encoding:</b><span class="mono" style="font-size:11px;color:#303942;margin-left:6px">gzip</span></span></div>
<div class="t dt" style="left:25px;top:230.79999999999984px;font-size:11.85px"><span><b style="color:#3c3f45">Content-Type:</b><span class="mono" style="font-size:11px;color:#303942;margin-left:6px">application/json</span></span></div>
<div class="t dt" style="left:25px;top:252.69999999999982px;font-size:11.85px"><span><b style="color:#3c3f45">Date:</b><span class="mono" style="font-size:11px;color:#303942;margin-left:6px">Fri, 20 Aug 2021 11:18:31 GMT</span></span></div>
<div class="t dt" style="left:25px;top:274.5999999999998px;font-size:11.85px"><span><b style="color:#3c3f45">Transfer-Encoding:</b><span class="mono" style="font-size:11px;color:#303942;margin-left:6px">chunked</span></span></div>
<div class="t dt" style="left:25px;top:296.4999999999998px;font-size:11.85px"><span><b style="color:#3c3f45">Vary:</b><span class="mono" style="font-size:11px;color:#303942;margin-left:6px">Accept-Encoding</span></span></div>
<div class="abs" style="left:0;top:305px;width:485px;height:20px;background:#dadada"></div>
<div class="t dt" style="left:25px;top:318.39999999999975px;font-size:11.85px"><span><b style="color:#3c3f45">X-Thanos-Trace-Id:</b><span class="mono" style="font-size:11px;color:#303942;margin-left:6px">131da78f02aa3525</span></span></div>
<div class="abs" style="left:0;top:331px;width:485px;height:1px;background:#e0e0e0"></div>
<svg class="abs" style="left:6px;top:342px" width="8" height="7" viewBox="0 0 8 7"><path d="M0.5 0.5 H7.5 L4 6.5 Z" fill="#5f6368"/></svg>
<div class="t dt" style="left:16px;top:349px;font-size:11.85px"><span><b style="color:#3c3f45">Request Headers</b></span></div>
<div class="t dt" style="left:143.5px;top:349px;color:#5f6368"><span>View source</span></div>
<div class="t dt" style="left:25px;top:373px;font-size:11.85px"><span><b style="color:#3c3f45">Accept:</b><span class="mono" style="font-size:11px;color:#303942;margin-left:6px">*/*</span></span></div>
<div class="t dt" style="left:25px;top:394.65px;font-size:11.85px"><span><b style="color:#3c3f45">Accept-Encoding:</b><span class="mono" style="font-size:11px;color:#303942;margin-left:6px">gzip, deflate, br</span></span></div>
<div class="t dt" style="left:25px;top:416.29999999999995px;font-size:11.85px"><span><b style="color:#3c3f45">Accept-Language:</b><span class="mono" style="font-size:11px;color:#303942;margin-left:6px">en-GB,en;q=0.9,pl-PL;q=0.8,pl;q=0.7,en-US;q=0.6,zh-T</span></span></div>
<div class="t dt" style="left:25px;top:437.94999999999993px;font-size:11.85px"><span><span class="mono" style="font-size:11px;color:#3c3f45">W;q=0.5,zh;q=0.4</span></span></div>
<div class="t dt" style="left:25px;top:459.5999999999999px;font-size:11.85px"><span><b style="color:#3c3f45">Connection:</b><span class="mono" style="font-size:11px;color:#303942;margin-left:6px">keep-alive</span></span></div>
<div class="t dt" style="left:25px;top:481.2499999999999px;font-size:11.85px"><span><b style="color:#3c3f45">Host:</b><span class="mono" style="font-size:11px;color:#303942;margin-left:6px">127.0.0.1:49393</span></span></div>
<div class="t dt" style="left:25px;top:502.89999999999986px;font-size:11.85px"><span><b style="color:#3c3f45">Referer:</b><span class="mono" style="font-size:11px;color:#303942;margin-left:6px">http://127.0.0.1:49393/graph?g0.expr=sum(continuous_app_metri</span></span></div>
<div class="t dt" style="left:25px;top:524.5499999999998px;font-size:11.85px"><span><span class="mono" style="font-size:11px;color:#3c3f45">c99)%20by%20(cluster%2C%20replica)&amp;g0.tab=0&amp;g0.stacked=0&amp;g0.range_inp</span></span></div>
<div class="t dt" style="left:25px;top:546.1999999999998px;font-size:11.85px"><span><span class="mono" style="font-size:11px;color:#3c3f45">ut=2w&amp;g0.max_source_resolution=0s&amp;g0.deduplicate=0&amp;g0.partial_respons</span></span></div>
<div class="t dt" style="left:25px;top:567.8499999999998px;font-size:11.85px"><span><span class="mono" style="font-size:11px;color:#3c3f45">e=0&amp;g0.store_matches=%5B%5D&amp;g0.end_input=2021-07-27%2000%3A00%3A00</span></span></div>
<div class="t dt" style="left:25px;top:589.4999999999998px;font-size:11.85px"><span><b style="color:#3c3f45">sec-ch-ua:</b><span class="mono" style="font-size:11px;color:#303942;margin-left:6px">" Not;A Brand";v="99", "Google Chrome";v="91", "Chromium";v</span></span></div>
<div class="t dt" style="left:25px;top:611.1499999999997px;font-size:11.85px"><span><span class="mono" style="font-size:11px;color:#3c3f45">="91"</span></span></div>
<div class="t dt" style="left:25px;top:632.7999999999997px;font-size:11.85px"><span><b style="color:#3c3f45">sec-ch-ua-mobile:</b><span class="mono" style="font-size:11px;color:#303942;margin-left:6px">?0</span></span></div>
<div class="t dt" style="left:25px;top:654.4499999999997px;font-size:11.85px"><span><b style="color:#3c3f45">Sec-Fetch-Dest:</b><span class="mono" style="font-size:11px;color:#303942;margin-left:6px">empty</span></span></div>
<div class="t dt" style="left:25px;top:676.0999999999997px;font-size:11.85px"><span><b style="color:#3c3f45">Sec-Fetch-Mode:</b><span class="mono" style="font-size:11px;color:#303942;margin-left:6px">cors</span></span></div>
<div class="t dt" style="left:25px;top:697.7499999999997px;font-size:11.85px"><span><b style="color:#3c3f45">Sec-Fetch-Site:</b><span class="mono" style="font-size:11px;color:#303942;margin-left:6px">same-origin</span></span></div>
<div class="t dt" style="left:25px;top:719.3999999999996px;font-size:11.85px"><span><b style="color:#3c3f45">User-Agent:</b><span class="mono" style="font-size:11px;color:#303942;margin-left:6px">Mozilla/5.0 (X11; Linux x86_64) AppleWebKit/537.36 (KHTML,</span></span></div>
<div class="t dt" style="left:25px;top:741.0499999999996px;font-size:11.85px"><span><span class="mono" style="font-size:11px;color:#3c3f45">like Gecko) Chrome/91.0.4472.164 Safari/537.36</span></span></div>
<div class="abs" style="left:0;top:753px;width:485px;height:1px;background:#e0e0e0"></div>
<div class="t dt" style="left:16px;top:772px;font-size:11.85px"><span><b style="color:#3c3f45">Query String Parameters</b></span></div>
</div>
<div class="abs" style="left:1900px;top:217px;width:12px;height:761px;background:#f1f1f1"></div>
<div class="abs" style="left:1902px;top:331px;width:9px;height:541px;background:#c1c1c1"></div>
<div class="abs" style="left:1904px;top:222px;width:0;height:0;border-left:3.5px solid transparent;border-right:3.5px solid transparent;border-bottom:4px solid #505050"></div>
</body></html>
